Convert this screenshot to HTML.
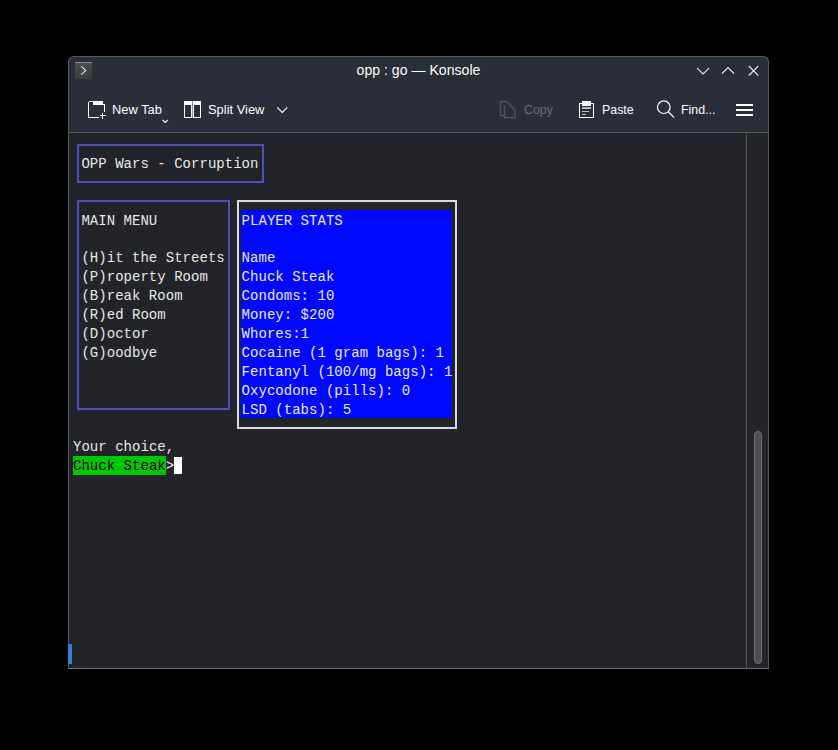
<!DOCTYPE html>
<html><head><meta charset="utf-8">
<style>
html,body{margin:0;padding:0;}
body{width:838px;height:750px;background:#000;position:relative;overflow:hidden;font-family:"Liberation Sans",sans-serif;}
.a{position:absolute;}
#win{left:68px;top:56px;width:701px;height:613px;box-sizing:border-box;border:1px solid #5a5d62;border-bottom-color:#6a6c70;border-radius:6px 6px 0 0;background:#2a2e36;overflow:hidden;}
#term{left:69px;top:133px;width:677px;height:535px;background:#232429;}
#sb{left:747px;top:133px;width:21px;height:535px;background:#242529;}
#sep{left:69px;top:132px;width:699px;height:1px;background:#55585e;}
#sbdiv{left:746px;top:133px;width:1px;height:535px;background:#505257;}
.ui{color:#fcfcfc;font-size:12.7px;line-height:16px;white-space:nowrap;}
.t{position:absolute;font-family:"Liberation Mono",monospace;font-size:14px;letter-spacing:0.03px;line-height:19px;color:#e8e8e8;white-space:pre;}
svg{position:absolute;overflow:visible;}
</style></head><body>
<div id="win" class="a"></div>
<!-- title bar icon -->
<div class="a" style="left:75px;top:62px;width:17px;height:17px;background:linear-gradient(160deg,#4e5052,#37393c);"></div>
<div class="a" style="left:75px;top:62px;width:17px;height:1px;background:#8c8e90;"></div>
<svg style="left:0;top:0" width="838" height="750">
  <polyline points="81.3,66.3 85.8,70.5 81.3,74.7" fill="none" stroke="#e8e8e8" stroke-width="1.05"/>
</svg>
<div class="a ui" style="left:356.6px;top:60.5px;font-size:14.1px;line-height:18px;">opp : go — Konsole</div>
<!-- window buttons -->
<svg style="left:0;top:0" width="838" height="750">
  <polyline points="697,68.2 703,74 709,68.2" fill="none" stroke="#e6e6e6" stroke-width="1.15"/>
  <polyline points="722,73.5 728,67.5 734,73.5" fill="none" stroke="#e6e6e6" stroke-width="1.15"/>
  <path d="M748.8,66 L758.3,75.5 M758.3,66 L748.8,75.5" fill="none" stroke="#e6e6e6" stroke-width="1.15"/>
</svg>
<!-- toolbar -->
<div class="a ui" style="left:112px;top:102px;font-size:12.9px;">New Tab</div>
<div class="a ui" style="left:208px;top:102px;font-size:12.9px;">Split View</div>
<div class="a ui" style="left:524px;top:102px;font-size:12.4px;color:#6b6e74;">Copy</div>
<div class="a ui" style="left:602px;top:102px;font-size:12.4px;">Paste</div>
<div class="a ui" style="left:681px;top:102px;font-size:12.4px;">Find...</div>
<!-- toolbar icons -->
<svg style="left:0;top:0" width="838" height="750" shape-rendering="crispEdges">
  <!-- new tab -->
  <path d="M88.5,101.5 H102.5 M88.5,101.5 V117.5 H99 M104.5,104 V112 M102,104.5 H105" fill="none" stroke="#fcfcfc" stroke-width="1"/>
  <rect x="93" y="101" width="10" height="4" fill="#fcfcfc"/>
  <path d="M99.5,115.5 H105.5 M102.5,112.5 V118.5" fill="none" stroke="#fcfcfc" stroke-width="1.2"/>
  <!-- split view -->
  <rect x="184.5" y="101.5" width="7" height="16" fill="none" stroke="#fcfcfc" stroke-width="1"/>
  <rect x="193.5" y="101.5" width="7" height="16" fill="none" stroke="#fcfcfc" stroke-width="1"/>
  <rect x="184" y="101" width="8" height="4" fill="#fcfcfc"/>
  <rect x="193" y="101" width="8" height="4" fill="#fcfcfc"/>
  <rect x="192" y="101" width="1" height="17" fill="#8e9094"/>
  <!-- paste -->
  <rect x="579.5" y="103.5" width="14" height="14" fill="none" stroke="#fcfcfc" stroke-width="1"/>
  <rect x="582" y="101" width="9" height="5" fill="#fcfcfc"/>
  <rect x="582" y="107" width="9" height="1.5" fill="#b8babd"/>
  <rect x="582" y="110.5" width="7" height="1.5" fill="#b8babd"/>
  <rect x="582" y="113.5" width="3.5" height="1.5" fill="#b8babd"/>
  <!-- hamburger -->
  <rect x="736" y="103.5" width="17" height="2" fill="#fcfcfc"/>
  <rect x="736" y="108.5" width="17" height="2" fill="#fcfcfc"/>
  <rect x="736" y="113.5" width="17" height="2" fill="#fcfcfc"/>
</svg>
<svg style="left:0;top:0" width="838" height="750">
  <!-- copy (disabled) -->
  <path d="M504.5,115.5 H500.5 V101.5 H506.5 L515,110 V117.5 H504.5 V105" fill="none" stroke="#50535b" stroke-width="1.4"/>
  <!-- find -->
  <circle cx="663.8" cy="107.2" r="6.3" fill="none" stroke="#fcfcfc" stroke-width="1.2"/>
  <path d="M668.3,111.7 L674.2,117.6" fill="none" stroke="#fcfcfc" stroke-width="1.3"/>
  <!-- chevrons -->
  <polyline points="162.5,119.8 165.2,122.5 167.9,119.8" fill="none" stroke="#fcfcfc" stroke-width="1.1"/>
  <polyline points="277.3,107.3 282.3,112.3 287.3,107.3" fill="none" stroke="#fcfcfc" stroke-width="1.2"/>
</svg>
<div id="sep" class="a"></div>
<div id="term" class="a"></div>
<div id="sb" class="a"></div>
<div id="sbdiv" class="a"></div>
<div class="a" style="left:77px;top:144px;width:187px;height:39px;box-sizing:border-box;border:2px solid #5252a6;box-shadow:0 0 1px 0.6px rgba(28,28,95,.55),inset 0 0 1px 0.6px rgba(28,28,95,.55);"></div>
<div class="a" style="left:77px;top:200px;width:153px;height:210px;box-sizing:border-box;border:2px solid #5252a6;box-shadow:0 0 1px 0.6px rgba(28,28,95,.55),inset 0 0 1px 0.6px rgba(28,28,95,.55);"></div>
<div class="a" style="left:237px;top:200px;width:220px;height:229px;box-sizing:border-box;border:2px solid #dcdcdc;"></div>
<div class="a" style="left:240.5px;top:210px;width:211.5px;height:208px;background:#0008fc;"></div>
<div class="a" style="left:73px;top:456px;width:92.7px;height:18.6px;background:#00c800;"></div>
<div class="a" style="left:174px;top:457px;width:8.4px;height:17.3px;background:#fcfcfc;"></div>
<div class="t" style="left:81.43px;top:154.90px">OPP Wars - Corruption</div>
<div class="t" style="left:81.43px;top:211.60px">MAIN MENU</div>
<div class="t" style="left:81.43px;top:249.40px">(H)it the Streets</div>
<div class="t" style="left:81.43px;top:268.30px">(P)roperty Room</div>
<div class="t" style="left:81.43px;top:287.20px">(B)reak Room</div>
<div class="t" style="left:81.43px;top:306.10px">(R)ed Room</div>
<div class="t" style="left:81.43px;top:325.00px">(D)octor</div>
<div class="t" style="left:81.43px;top:343.90px">(G)oodbye</div>
<div class="t" style="left:241.60px;top:211.60px">PLAYER STATS</div>
<div class="t" style="left:241.60px;top:249.40px">Name</div>
<div class="t" style="left:241.60px;top:268.30px">Chuck Steak</div>
<div class="t" style="left:241.60px;top:287.20px">Condoms: 10</div>
<div class="t" style="left:241.60px;top:306.10px">Money: $200</div>
<div class="t" style="left:241.60px;top:325.00px">Whores:1</div>
<div class="t" style="left:241.60px;top:343.90px">Cocaine (1 gram bags): 1</div>
<div class="t" style="left:241.60px;top:362.80px">Fentanyl (100/mg bags): 1</div>
<div class="t" style="left:241.60px;top:381.70px">Oxycodone (pills): 0</div>
<div class="t" style="left:241.60px;top:400.60px">LSD (tabs): 5</div>
<div class="t" style="left:73.00px;top:438.40px">Your choice,</div>
<div class="t" style="left:73.00px;top:457.30px;color:#000">Chuck Steak</div>
<div class="t" style="left:165.73px;top:457.30px">&gt;</div>
<!-- scrollbar handle -->
<div class="a" style="left:754px;top:431px;width:8px;height:233px;box-sizing:border-box;border:1px solid #6c6e72;border-radius:4px;background:#4c4e53;"></div>
<!-- blue marker -->
<div class="a" style="left:68px;top:644px;width:4px;height:20px;background:#3580d0;"></div>
</body></html>
